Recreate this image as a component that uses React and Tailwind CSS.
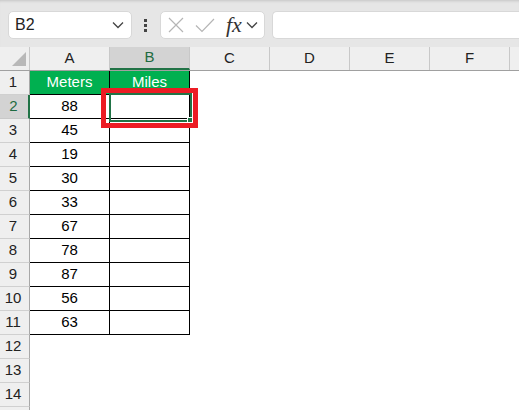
import React from 'react';

const meters = [88, 45, 19, 30, 33, 67, 78, 87, 56, 63];
const cols = ['A', 'B', 'C', 'D', 'E', 'F'];

function Chevron({ className }) {
  return (
    <svg className={className} width="12" height="8" viewBox="0 0 12 8" fill="none">
      <path d="M1 1.5 L6 6.5 L11 1.5" stroke="#444" strokeWidth="1.3" />
    </svg>
  );
}

function Toolbar() {
  return (
    <div className="flex h-[47px] items-start bg-[#e6e6e6] pt-[11px] shadow-[inset_0_3px_3px_-2px_rgba(0,0,0,0.15)]">
      <div className="ml-[8px] flex h-[28px] w-[124px] items-center justify-between rounded-[5px] border border-[#d8d8d8] bg-white pl-[6px] pr-[7px]">
        <span className="text-[16px] text-[#222]">B2</span>
        <Chevron />
      </div>
      <div className="ml-[12px] mt-[8px] flex w-[4px] flex-col gap-[2px]">
        <span className="h-[3px] w-[3px] bg-[#444]" />
        <span className="h-[3px] w-[3px] bg-[#444]" />
        <span className="h-[3px] w-[3px] bg-[#444]" />
      </div>
      <div className="ml-[12px] flex h-[28px] w-[105px] items-center rounded-[5px] border border-[#d8d8d8] bg-white">
        <svg className="ml-[7px]" width="16" height="16" viewBox="0 0 16 16">
          <path d="M1 1 L15 15 M15 1 L1 15" stroke="#b5b5b5" strokeWidth="1.2" />
        </svg>
        <svg className="ml-[11px]" width="20" height="15" viewBox="0 0 20 15">
          <path d="M1 7.5 L7 13.5 L19 1" stroke="#b5b5b5" strokeWidth="1.2" fill="none" />
        </svg>
        <span className="ml-[11px] font-['Liberation_Serif',serif] text-[22px] italic leading-none text-[#333]">fx</span>
        <Chevron className="ml-[4px]" />
      </div>
      <div className="ml-[7px] h-[28px] flex-1 rounded-l-[5px] border border-r-0 border-[#d8d8d8] bg-white" />
    </div>
  );
}

function ColumnHeaders() {
  return (
    <div className="flex h-[24px] border-b border-[#a0a0a0] bg-[#efefef]">
      <div className="flex w-[30px] shrink-0 items-end justify-end border-r border-[#c8c8c8] pb-[4px] pr-[3px]">
        <svg width="14" height="14" viewBox="0 0 14 14">
          <polygon points="14,0 14,14 0,14" fill="#b8b8b8" />
        </svg>
      </div>
      {cols.map((c) => (
        <div
          key={c}
          className={
            c === 'B'
              ? 'flex w-[80px] shrink-0 items-center justify-center border-r border-b-2 border-r-[#c8c8c8] border-b-[#217346] bg-[#d3d3d3] text-[#1e6b40]'
              : 'flex w-[80px] shrink-0 items-center justify-center border-r border-[#c8c8c8] text-[#222]'
          }
        >
          {c}
        </div>
      ))}
      <div className="flex-1" />
    </div>
  );
}

function Row({ n }) {
  const inTable = n <= 11;
  const header = n === 1;
  const active = n === 2;
  const cellBase = 'flex h-full w-[80px] shrink-0 items-center justify-center';
  const tableCell = inTable ? ' border-r border-b border-black' : '';
  const fill = header ? ' bg-[#00b050] text-white' : '';
  return (
    <div className="flex h-[24px]">
      <div
        className={
          active
            ? 'flex w-[30px] shrink-0 items-center justify-center border-b border-r-2 border-b-[#c8c8c8] border-r-[#217346] bg-[#d3d3d3] pr-[1px] text-[#1e6b40]'
            : 'flex w-[30px] shrink-0 items-center justify-center border-b border-r border-b-[#d0d0d0] border-r-[#a8a8a8] bg-[#efefef] pr-[3px] text-[#222]'
        }
      >
        {n < 15 ? n : ''}
      </div>
      <div className={cellBase + tableCell + fill}>{header ? 'Meters' : inTable ? meters[n - 2] : ''}</div>
      <div className={cellBase + tableCell + fill}>{header ? 'Miles' : ''}</div>
      <div className={cellBase} />
      <div className={cellBase} />
      <div className={cellBase} />
      <div className={cellBase} />
      <div className="flex-1" />
    </div>
  );
}

export default function App() {
  const rows = Array.from({ length: 15 }, (_, i) => i + 1);
  return (
    <div className="h-[410px] w-[519px] overflow-hidden bg-white font-['Liberation_Sans',Arial,sans-serif] text-[15px]">
      <Toolbar />
      <ColumnHeaders />
      <div className="relative">
        {rows.map((n) => (
          <Row key={n} n={n} />
        ))}
        {/* active cell B2 */}
        <div className="absolute left-[109px] top-[22px] h-[29px] w-[83px] border-2 border-[#217346]" />
        <div className="absolute left-[187px] top-[46px] h-[6px] w-[6px] border border-white bg-[#217346]" />
        {/* red highlight */}
        <div className="absolute left-[101px] top-[17px] h-[40px] w-[97px] border-[5px] border-[#ec1c24]" />
      </div>
    </div>
  );
}
